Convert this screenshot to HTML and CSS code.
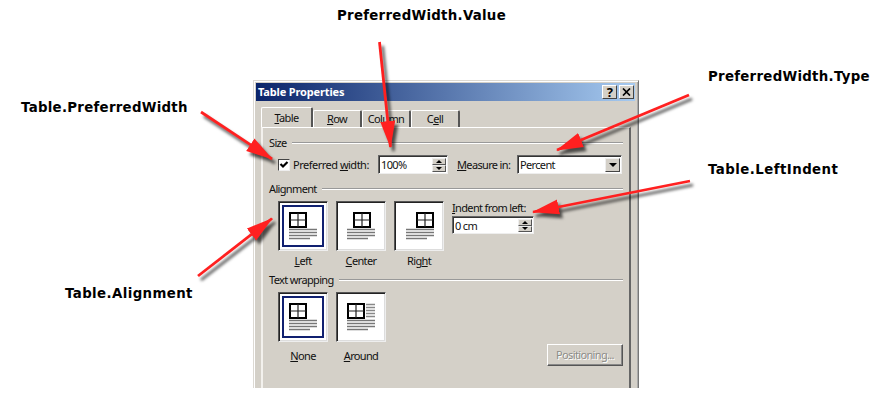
FILE: index.html
```html
<!DOCTYPE html>
<html lang="en">
<head>
<meta charset="utf-8">
<title>Table Properties</title>
<link rel="stylesheet" href="styles.css">
</head>
<body>
<svg class="defs" width="0" height="0">
  <defs>
    <g id="grid"><rect x="1" y="1" width="16" height="14" fill="#fff" stroke="#000" stroke-width="2"/><path d="M9 1v14M1 8h16" stroke="#222" stroke-width="1.2"/></g>
    <path id="lines" d="M0 .5h28M0 3.5h28M0 6.5h28M0 9.5h21" stroke="#777" stroke-width="1.7"/>
  </defs>
</svg>
<main class="dialog">
  <header class="titlebar">
    <h1>Table Properties</h1>
    <button class="cap">?</button>
    <button class="cap"><svg width="9" height="8"><path d="M1 .5l7 7M8 .5l-7 7" stroke="#000" stroke-width="1.7"/></svg></button>
  </header>
  <nav class="tabs">
    <div class="tab active"><span><u>T</u>able</span></div>
    <div class="tab"><span><u>R</u>ow</span></div>
    <div class="tab"><span>Col<u>u</u>mn</span></div>
    <div class="tab"><span>C<u>e</u>ll</span></div>
  </nav>
  <section class="panel">
    <div class="group"><span>Size</span><i></i></div>
    <div class="size-row">
      <span class="check"><svg width="10" height="10"><path d="M1.5 4l2.500 2.500L8.500 2" fill="none" stroke="#000" stroke-width="2.2"/></svg></span>
      <span class="pref">Preferred <u>w</u>idth:</span>
      <div class="field width-field"><span>100%</span><div class="spin"><b class="up"></b><b class="down"></b></div></div>
      <span class="measure"><u>M</u>easure in:</span>
      <div class="field select"><span>Percent</span><div class="drop"><b></b></div></div>
    </div>
    <div class="group"><span>Alignment</span><i></i></div>
    <div class="choices align">
      <div class="choice"><div class="box selected"><svg width="48" height="48"><use href="#grid" x="10" y="10"/><use href="#lines" x="10" y="27"/></svg></div><span><u>L</u>eft</span></div>
      <div class="choice"><div class="box"><svg width="48" height="48"><use href="#grid" x="16" y="10"/><use href="#lines" x="10" y="27"/></svg></div><span><u>C</u>enter</span></div>
      <div class="choice"><div class="box"><svg width="48" height="48"><use href="#grid" x="21" y="10"/><use href="#lines" x="11" y="27"/></svg></div><span>Rig<u>h</u>t</span></div>
      <div class="indent"><label><u>I</u>ndent from left:</label><div class="field indent-field"><span>0 cm</span><div class="spin"><b class="up"></b><b class="down"></b></div></div></div>
    </div>
    <div class="group"><span>Text wrapping</span><i></i></div>
    <div class="choices wrapping">
      <div class="choice"><div class="box selected"><svg width="48" height="48"><use href="#grid" x="10" y="10"/><use href="#lines" x="10" y="27"/></svg></div><span><u>N</u>one</span></div>
      <div class="choice"><div class="box"><svg width="48" height="48"><use href="#grid" x="10" y="10"/><use href="#lines" x="10" y="27"/><path d="M29 11.5h9M29 14.5h9M29 17.5h9M29 20.5h9M29 23.5h9" stroke="#888" stroke-width="1.6"/></svg></div><span><u>A</u>round</span></div>
      <button class="positioning">Positioning...</button>
    </div>
  </section>
</main>
<div class="note n-value">PreferredWidth.Value</div>
<div class="note n-width">Table.PreferredWidth</div>
<div class="note n-type">PreferredWidth.Type</div>
<div class="note n-indent">Table.LeftIndent</div>
<div class="note n-align">Table.Alignment</div>
<svg class="arrows" width="881" height="405">
  <defs><marker id="head" markerUnits="userSpaceOnUse" markerWidth="30" markerHeight="20" refX="26" refY="8" orient="auto"><path d="M0 .5L27 8L0 15.5Z" fill="#ff2020"/></marker></defs>
  <g stroke="#ff2020" stroke-width="2.8">
    <path d="M379.5 42L390.5 147" marker-end="url(#head)"/>
    <path d="M201 112L272 159" marker-end="url(#head)"/>
    <path d="M689 95L557 150" marker-end="url(#head)"/>
    <path d="M690 181L533 212" marker-end="url(#head)"/>
    <path d="M198 276L272 218.5" marker-end="url(#head)"/>
  </g>
</svg>
</body>
</html>
```
FILE: styles.css
```css
* { box-sizing: border-box; }
body { margin: 0; width: 881px; height: 405px; overflow: hidden; background: #fff; position: relative; padding: 80px 0 0 253px; font: 11px/14px "Noto Sans", sans-serif; letter-spacing: -.65px; color: #111; }
.defs { position: absolute; }
button { font: inherit; letter-spacing: inherit; padding: 0; }
u { text-decoration: underline; text-underline-offset: 1px; text-decoration-thickness: 1px; }
.dialog { width: 386px; height: 308px; background: #d4d0c8; border: 1px solid #dcd9d3; border-right: 1px solid #777; border-bottom: 0; box-shadow: inset 1px 1px #fff, inset -1px 0 #aaa; padding: 2px; overflow: hidden; }
.titlebar { height: 18px; width: 379px; display: flex; align-items: center; background: linear-gradient(90deg, #0a246a, #a6caf0); padding: 0 1px 0 2px; gap: 2px; }
.titlebar h1 { flex: 1; margin: 0; color: #fff; font: 700 11px/16px "Noto Sans", sans-serif; letter-spacing: -.15px; padding-bottom: 1px; }
.cap { width: 15px; height: 14px; background: #d4d0c8; border: 1px solid; border-color: #fff #444 #444 #fff; display: flex; align-items: center; justify-content: center; font-weight: 700; font-size: 13px; line-height: 12px; color: #000; }
.tabs { display: flex; align-items: flex-end; height: 26px; padding-left: 5px; }
.tab { height: 17px; width: 49px; border-top: 1px solid #fff; border-left: 1px solid #fff; border-right: 2px solid #555; border-radius: 2px 2px 0 0; text-align: center; padding-top: 1px; }
.tab.active { height: 20px; width: 52px; padding-top: 3px; }
.panel { margin-left: 5px; width: 370px; height: 270px; border-left: 2px solid #f3f1ed; border-top: 1px solid #fff; border-right: 2px solid #666; padding: 8px 7px 0 6px; }
.group { display: flex; align-items: center; height: 14px; gap: 5px; width: 354px; }
.group i { flex: 1; height: 2px; background: #999; border-bottom: 1px solid #fff; }
.size-row { display: flex; align-items: center; height: 21px; margin: 4px 0 7px; padding-left: 9px; white-space: nowrap; }
.check { width: 12px; height: 12px; background: #fff; border: 1px solid; border-color: #444 #eee #eee #444; display: flex; }
.pref { width: 85px; margin-left: 3px; letter-spacing: -.5px; }
.field { display: flex; justify-content: space-between; background: #fff; border: 1px solid; border-color: #666 #eee #eee #666; box-shadow: inset 1px 1px #333; padding: 2px 1px 1px 2px; line-height: 14px; }
.width-field { width: 70px; height: 19px; }
.spin { width: 14px; display: flex; flex-direction: column; }
.spin b { flex: 1; background: #d4d0c8; border: 1px solid; border-color: #eee #555 #555 #eee; display: flex; align-items: center; justify-content: center; }
.spin b::after { content: ""; border: 3px solid transparent; border-bottom: 3px solid #000; border-top: 0; }
.spin .down::after { border-top: 3px solid #000; border-bottom: 0; }
.measure { margin-left: 9px; width: 60px; }
.select { width: 105px; height: 19px; }
.drop { width: 15px; background: #d4d0c8; border: 1px solid; border-color: #eee #444 #444 #eee; display: flex; align-items: center; justify-content: center; }
.drop b { border: 4px solid transparent; border-top-color: #000; border-bottom: 0; }
.choices { display: flex; padding-left: 9px; gap: 8px; }
.align { margin-top: 5px; height: 72px; }
.choice { width: 50px; display: flex; flex-direction: column; align-items: center; gap: 3px; }
.box { width: 50px; height: 50px; background: #fff; border: 1px solid; border-color: #555 #eee #eee #555; box-shadow: inset 1px 1px #222, inset -1px -1px #ddd; }
.box svg { display: block; }
.selected svg { outline: 2px solid #102070; outline-offset: -5px; }
.indent label { display: block; }
.indent-field { width: 82px; height: 18px; margin-top: 1px; }
.wrapping { margin-top: 5px; height: 76px; }
.wrapping .choice { gap: 7px; }
.positioning { margin: 52px 0 0 153px; width: 76px; height: 22px; flex-shrink: 0; color: #8c8c88; text-shadow: 1px 1px #fff; background: #d4d0c8; border: 1px solid; border-color: #fff #555 #555 #fff; box-shadow: inset -1px -1px #888; }
.note { position: absolute; font: 700 13.33px/18px "DejaVu Sans", sans-serif; letter-spacing: .28px; color: #000; white-space: nowrap; }
.n-value { left: 337px; top: 7px; }
.n-width { left: 21px; top: 99px; }
.n-type { left: 708px; top: 68px; }
.n-indent { left: 708px; top: 161px; letter-spacing: .45px; }
.n-align { left: 65px; top: 285px; letter-spacing: .4px; }
.arrows { position: absolute; left: 0; top: 0; filter: drop-shadow(3px 4px 1.5px rgba(0,0,0,.65)); }
```
